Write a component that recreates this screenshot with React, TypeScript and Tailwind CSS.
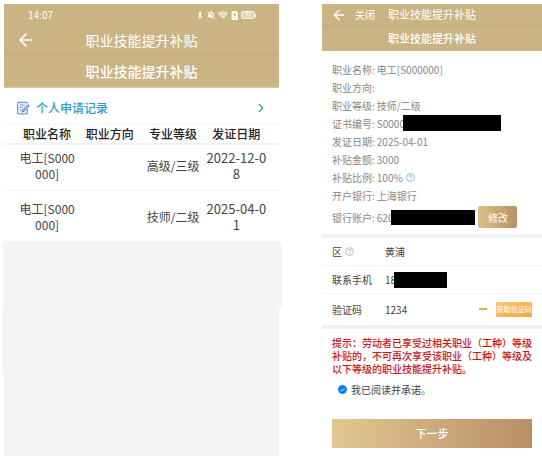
import { useState } from "react";
import { ArrowLeft, BellOff, Bluetooth, ChevronRight, Wifi } from "lucide-react";

const PAGE_TITLE = "职业技能提升补贴";

interface ApplyRecord {
  name: string;
  direction: string;
  level: string;
  date: string;
}

const records: ApplyRecord[] = [
  { name: "电工[S000000]", direction: "", level: "高级/三级", date: "2022-12-08" },
  { name: "电工[S000000]", direction: "", level: "技师/二级", date: "2025-04-01" },
];

function HelpIcon({ className }: { className: string }) {
  return (
    <svg viewBox="0 0 18 18" fill="none" stroke="currentColor" strokeWidth="1.6" className={className}>
      <circle cx="9" cy="9" r="7.8" />
      <path d="M6.6 7.2a2.4 2.4 0 1 1 3.4 2.2c-.7.3-1 .7-1 1.4M9 12.4v1.4" />
    </svg>
  );
}

function RecordIcon() {
  return (
    <svg viewBox="0 0 26 26" fill="none" className="h-[14px] w-[14px] shrink-0">
      <path
        d="M21 15v7.5a1.5 1.5 0 0 1-1.5 1.5h-15A1.5 1.5 0 0 1 3 22.5V4a1.5 1.5 0 0 1 1.5-1.5h15A1.5 1.5 0 0 1 21 4v1"
        fill="#eaf0fb"
        stroke="#7b98d0"
        strokeWidth="2.2"
      />
      <path d="M7 7.5h9M7 12h5M7 17h3" stroke="#7b98d0" strokeWidth="2" />
      <path d="M22.5 6.5l2.5 2.3-9.5 10-4 1.4 1.2-3.9z" fill="#b9cbee" stroke="#4f74bd" strokeWidth="1.8" />
    </svg>
  );
}

function StatusBar() {
  return (
    <div className="flex h-[22px] items-center justify-between pr-[23px] pl-6 text-[10px]">
      <span>14:07</span>
      <div className="flex items-center gap-[3px]">
        <Bluetooth className="h-2 w-2" strokeWidth={3} />
        <BellOff className="h-2 w-2" fill="currentColor" strokeWidth={3} />
        <Wifi className="h-[10px] w-[10px]" strokeWidth={3} />
        <svg viewBox="0 0 12 16" className="h-[9px] w-[7px]">
          <path d="M1 0h8l3 3v13H1z" fill="#fff" />
          <path d="M6.5 3.5V9M6.5 11v2" stroke="#b39c69" strokeWidth="2" />
        </svg>
        <div className="flex items-center">
          <span className="flex h-2 w-[14px] items-center justify-center rounded-[3px] border border-white/80 bg-white/40 text-[6px] leading-none">
            97
          </span>
          <span className="h-[3px] w-px bg-white/80" />
        </div>
      </div>
    </div>
  );
}

function RecordsPhone() {
  return (
    <section className="flex min-w-0 flex-[275] flex-col text-[12px] leading-4">
      <header className="bg-[#cab484] text-white">
        <StatusBar />
        <div className="grid h-[29px] grid-cols-[1fr_auto_1fr] items-center border-b border-[#c0a978] pb-px">
          <button type="button" aria-label="返回" className="ml-3 w-5">
            <ArrowLeft className="h-5 w-5" />
          </button>
          <h1 className="text-[14px]">{PAGE_TITLE}</h1>
        </div>
        <h2 className="border-b border-[#dcc7a0] py-2 text-center text-[14px] font-medium">{PAGE_TITLE}</h2>
      </header>

      <a href="#records" className="flex h-9 items-center gap-[6px] pt-[3px] pr-[11px] pl-3 font-medium text-[#2d9cc9]">
        <RecordIcon />
        <span className="flex-1">个人申请记录</span>
        <ChevronRight className="h-[14px] w-[14px]" />
      </a>

      <table id="records" className="w-full table-fixed border-t border-[#f3f3f3] text-center text-[#444]">
        <colgroup>
          <col className="w-[27%]" />
          <col className="w-[23%]" />
          <col className="w-[23%]" />
          <col className="w-[27%]" />
        </colgroup>
        <thead className="border-b-2 border-[#f1f1f1] text-[#222]">
          <tr>
            <th className="h-[19px] p-0 pl-3 font-medium">职业名称</th>
            <th className="p-0 font-medium">职业方向</th>
            <th className="p-0 font-medium">专业等级</th>
            <th className="p-0 pr-[11px] font-medium">发证日期</th>
          </tr>
        </thead>
        <tbody>
          {records.map((r) => (
            <tr key={r.date} className="border-b border-[#f3f3f3] *:pt-[10px] *:pb-2 first:*:pt-[5px]">
              <td className="pr-px pl-[13px] break-all">{r.name}</td>
              <td className="px-px">{r.direction}</td>
              <td className="px-px">{r.level}</td>
              <td className="pr-3 pl-px text-[13px] break-all">{r.date}</td>
            </tr>
          ))}
        </tbody>
      </table>

      <div className="-mr-[3px] -ml-px flex-[67] bg-[#f4f4f4]" />
      <div className="-ml-[2px] flex-[66] bg-[#f4f4f4]" />
      <div className="flex-[82] bg-[#f4f4f4]" />
    </section>
  );
}

function Detail({ label, children }: { label: string; children?: React.ReactNode }) {
  return (
    <div className="flex h-[18px] items-center gap-[2px]">
      <dt>{label}:</dt>
      <dd className="flex items-center">{children}</dd>
    </div>
  );
}

function ApplyPhone() {
  const [code, setCode] = useState("1234");
  const [agreed, setAgreed] = useState(true);

  return (
    <section className="min-w-0 flex-[220] text-[10px] leading-[13px] text-[#444]">
      <header className="bg-[#cab484] text-[11px] text-white">
        <div className="grid h-[22px] grid-cols-[1fr_auto_1fr] items-center border-b border-[#c0a978]">
          <div className="flex items-center gap-2 pl-[9px]">
            <button type="button" aria-label="返回">
              <ArrowLeft className="h-4 w-4" />
            </button>
            <button type="button" className="text-[10px]">关闭</button>
          </div>
          <h1>{PAGE_TITLE}</h1>
        </div>
        <h2 className="py-[6px] text-center font-medium">{PAGE_TITLE}</h2>
      </header>

      <dl className="pt-[9px] pr-3 pb-[6px] pl-[10px] text-[#888]">
        <Detail label="职业名称">电工[S000000]</Detail>
        <Detail label="职业方向" />
        <Detail label="职业等级">技师/二级</Detail>
        <Detail label="证书编号">
          S0000
          <span className="-ml-[2px] h-4 w-[98px] bg-black" />
        </Detail>
        <Detail label="发证日期">2025-04-01</Detail>
        <Detail label="补贴金额">3000</Detail>
        <Detail label="补贴比例">
          100%
          <HelpIcon className="ml-[3px] h-[9px] w-[9px] text-[#5fb3cf]" />
        </Detail>
        <Detail label="开户银行">上海银行</Detail>
        <div className="mt-[2px] flex items-center gap-[2px]">
          <dt>银行账户:</dt>
          <dd className="flex items-center">
            620
            <span className="-ml-[2px] h-[15px] w-[84px] bg-black" />
            <button
              type="button"
              className="ml-[3px] h-[22px] w-[39px] rounded-[2px] bg-linear-to-r from-[#dcc08a] to-[#b99164] text-white"
            >
              修改
            </button>
          </dd>
        </div>
      </dl>

      <form className="border-t-4 border-[#f1f1f1]" onSubmit={(e) => e.preventDefault()}>
        <div className="flex h-7 items-center border-b border-[#f3f3f3] pl-[10px]">
          <span className="flex w-[53px] items-center gap-[3px]">
            区
            <HelpIcon className="h-[9px] w-[9px] text-[#aaa]" />
          </span>
          <span>黄浦</span>
        </div>
        <div className="flex h-7 items-center border-b border-[#f3f3f3] pl-[10px]">
          <span className="w-[53px]">联系手机</span>
          <span>18</span>
          <span className="-ml-[2px] h-4 w-[53px] bg-black" />
        </div>
        <div className="flex h-[31px] items-center pr-[10px] pl-[10px]">
          <label htmlFor="code" className="w-[53px] shrink-0">验证码</label>
          <input
            id="code"
            value={code}
            onChange={(e) => setCode(e.target.value)}
            className="min-w-0 flex-1 bg-transparent outline-none"
          />
          <span className="mb-[2px] h-[2px] w-2 bg-[#e3b04f]" />
          <button
            type="button"
            className="ml-[9px] h-[15px] w-9 rounded-[1px] bg-linear-to-br from-[#fbc776] to-[#fba43e] text-[7px] whitespace-nowrap text-white"
          >
            获取验证码
          </button>
        </div>

        <div className="border-t-4 border-[#f1f1f1] px-[10px] pt-[7px]">
          <p className="font-medium text-[#c4161c]">
            提示：劳动者已享受过相关职业（工种）等级补贴的，不可再次享受该职业（工种）等级及以下等级的职业技能提升补贴。
          </p>
          <label className="mt-2 flex items-center gap-1 pl-[6px]">
            <span className="relative flex">
              <input
                type="checkbox"
                checked={agreed}
                onChange={(e) => setAgreed(e.target.checked)}
                className="h-[9px] w-[9px] appearance-none rounded-full border border-[#0a7cf0] checked:bg-[#0a7cf0]"
              />
              {agreed && (
                <svg viewBox="0 0 18 18" className="pointer-events-none absolute inset-0" fill="none" stroke="#fff" strokeWidth="1.6">
                  <path d="M5 9.5l2.8 2.7L13 6.5" />
                </svg>
              )}
            </span>
            我已阅读并承诺。
          </label>
          <button
            type="submit"
            className="mt-[23px] h-[29px] w-full bg-linear-to-r from-[#e2c791] to-[#b88f66] text-[11px] font-medium text-white"
          >
            下一步
          </button>
        </div>
      </form>
    </section>
  );
}

export default function App() {
  return (
    <main className="flex min-h-screen gap-[43px] bg-white py-1 pl-1 font-['Noto_Sans_CJK_SC',sans-serif]">
      <RecordsPhone />
      <ApplyPhone />
    </main>
  );
}
